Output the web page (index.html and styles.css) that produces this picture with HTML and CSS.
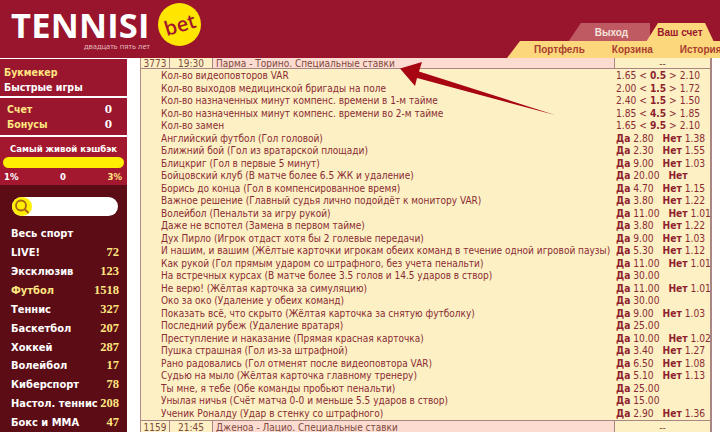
FILE: index.html
```html
<!DOCTYPE html>
<html lang="ru">
<head>
<meta charset="utf-8">
<title>Tennisi</title>
<link rel="stylesheet" href="styles.css">
</head>
<body>
<div class="page">
  <header class="header">
    <div class="logo">
      <div class="brand">
        <div class="brand-name">TENNISI</div>
        <div class="brand-sub">двадцать пять лет</div>
      </div>
      <div class="bet"><span>bet</span></div>
    </div>
    <nav class="tabs">
      <div class="tabs-top">
        <a class="tab tab-exit">Выход</a>
        <a class="tab tab-account">Ваш счет</a>
      </div>
      <div class="tabs-bottom">
        <a>Портфель</a><a>Корзина</a><a>История</a>
      </div>
    </nav>
  </header>
  <div class="body">
    <aside class="side">
      <section class="box box-nav">
        <div class="yellow">Букмекер</div>
        <div>Быстрые игры</div>
      </section>
      <section class="box box-acc">
        <div class="acc-row"><span class="yellow">Счет</span><b>0</b></div>
        <div class="acc-row"><span class="yellow">Бонусы</span><b>0</b></div>
      </section>
      <section class="box box-cash">
        <div class="cash-title">Самый живой кэшбэк</div>
        <div class="cash-bar"></div>
        <div class="cash-scale"><span>1%</span><span>0</span><span class="yellow">3%</span></div>
      </section>
      <section class="sports">
        <div class="search">
          <span class="search-icon">
            <svg width="19" height="19" viewBox="0 0 19 19"><circle cx="9" cy="8.5" r="5" fill="none" stroke="#a8651a" stroke-width="1.8"/><path d="M12.5 12l4 4" stroke="#a8651a" stroke-width="2" fill="none"/></svg>
          </span>
        </div>
        <div class="sport">Весь спорт</div>
        <div class="sport"><span>LIVE!</span><i>72</i></div>
        <div class="sport"><span>Эксклюзив</span><i>123</i></div>
        <div class="sport active"><span>Футбол</span><i>1518</i></div>
        <div class="sport"><span>Теннис</span><i>327</i></div>
        <div class="sport"><span>Баскетбол</span><i>207</i></div>
        <div class="sport"><span>Хоккей</span><i>287</i></div>
        <div class="sport"><span>Волейбол</span><i>17</i></div>
        <div class="sport"><span>Киберспорт</span><i>78</i></div>
        <div class="sport"><span>Настол. теннис</span><i>208</i></div>
        <div class="sport"><span>Бокс и ММА</span><i>47</i></div>
      </section>
    </aside>
    <main class="board">
      <div class="event">
        <div class="c-id">3773</div><div class="c-time">19:30</div><div class="c-title">Парма - Торино. Специальные ставки</div><div class="c-dash">--</div>
      </div>
      <div class="rows">
        <div class="row"><span>Кол-во видеоповторов VAR</span><span class="odds">1.65 &lt; <b>0.5</b> &gt; 2.10</span></div>
        <div class="row"><span>Кол-во выходов медицинской бригады на поле</span><span class="odds">2.00 &lt; <b>1.5</b> &gt; 1.72</span></div>
        <div class="row"><span>Кол-во назначенных минут компенс. времени в 1-м тайме</span><span class="odds">2.40 &lt; <b>1.5</b> &gt; 1.50</span></div>
        <div class="row"><span>Кол-во назначенных минут компенс. времени во 2-м тайме</span><span class="odds">1.85 &lt; <b>4.5</b> &gt; 1.85</span></div>
        <div class="row"><span>Кол-во замен</span><span class="odds">1.65 &lt; <b>9.5</b> &gt; 2.10</span></div>
        <div class="row"><span>Английский футбол (Гол головой)</span><span class="odds"><b>Да</b> 2.80 <b class="no">Нет</b> 1.38</span></div>
        <div class="row"><span>Ближний бой (Гол из вратарской площади)</span><span class="odds"><b>Да</b> 2.30 <b class="no">Нет</b> 1.55</span></div>
        <div class="row"><span>Блицкриг (Гол в первые 5 минут)</span><span class="odds"><b>Да</b> 9.00 <b class="no">Нет</b> 1.03</span></div>
        <div class="row"><span>Бойцовский клуб (В матче более 6.5 ЖК и удаление)</span><span class="odds"><b>Да</b> 20.00 <b class="no">Нет</b></span></div>
        <div class="row"><span>Борись до конца (Гол в компенсированное время)</span><span class="odds"><b>Да</b> 4.70 <b class="no">Нет</b> 1.15</span></div>
        <div class="row"><span>Важное решение (Главный судья лично подойдёт к монитору VAR)</span><span class="odds"><b>Да</b> 3.80 <b class="no">Нет</b> 1.22</span></div>
        <div class="row"><span>Волейбол (Пенальти за игру рукой)</span><span class="odds"><b>Да</b> 11.00 <b class="no">Нет</b> 1.01</span></div>
        <div class="row"><span>Даже не вспотел (Замена в первом тайме)</span><span class="odds"><b>Да</b> 3.80 <b class="no">Нет</b> 1.22</span></div>
        <div class="row"><span>Дух Пирло (Игрок отдаст хотя бы 2 голевые передачи)</span><span class="odds"><b>Да</b> 9.00 <b class="no">Нет</b> 1.03</span></div>
        <div class="row"><span>И нашим, и вашим (Жёлтые карточки игрокам обеих команд в течение одной игровой паузы)</span><span class="odds"><b>Да</b> 5.30 <b class="no">Нет</b> 1.12</span></div>
        <div class="row"><span>Как рукой (Гол прямым ударом со штрафного, без учета пенальти)</span><span class="odds"><b>Да</b> 11.00 <b class="no">Нет</b> 1.01</span></div>
        <div class="row"><span>На встречных курсах (В матче более 3.5 голов и 14.5 ударов в створ)</span><span class="odds"><b>Да</b> 30.00</span></div>
        <div class="row"><span>Не верю! (Жёлтая карточка за симуляцию)</span><span class="odds"><b>Да</b> 11.00 <b class="no">Нет</b> 1.01</span></div>
        <div class="row"><span>Око за око (Удаление у обеих команд)</span><span class="odds"><b>Да</b> 30.00</span></div>
        <div class="row"><span>Показать всё, что скрыто (Жёлтая карточка за снятую футболку)</span><span class="odds"><b>Да</b> 9.00 <b class="no">Нет</b> 1.03</span></div>
        <div class="row"><span>Последний рубеж (Удаление вратаря)</span><span class="odds"><b>Да</b> 25.00</span></div>
        <div class="row"><span>Преступление и наказание (Прямая красная карточка)</span><span class="odds"><b>Да</b> 10.00 <b class="no">Нет</b> 1.02</span></div>
        <div class="row"><span>Пушка страшная (Гол из-за штрафной)</span><span class="odds"><b>Да</b> 3.40 <b class="no">Нет</b> 1.27</span></div>
        <div class="row"><span>Рано радовались (Гол отменят после видеоповтора VAR)</span><span class="odds"><b>Да</b> 6.50 <b class="no">Нет</b> 1.08</span></div>
        <div class="row"><span>Судью на мыло (Жёлтая карточка главному тренеру)</span><span class="odds"><b>Да</b> 5.10 <b class="no">Нет</b> 1.13</span></div>
        <div class="row"><span>Ты мне, я тебе (Обе команды пробьют пенальти)</span><span class="odds"><b>Да</b> 25.00</span></div>
        <div class="row"><span>Унылая ничья (Счёт матча 0-0 и меньше 5.5 ударов в створ)</span><span class="odds"><b>Да</b> 15.00</span></div>
        <div class="row"><span>Ученик Роналду (Удар в стенку со штрафного)</span><span class="odds"><b>Да</b> 2.90 <b class="no">Нет</b> 1.36</span></div>
      </div>
      <div class="event event-last">
        <div class="c-id">1159</div><div class="c-time">21:45</div><div class="c-title">Дженоа - Лацио. Специальные ставки</div><div class="c-dash">--</div>
      </div>
    </main>
  </div>
  <svg class="arrow" width="720" height="432" viewBox="0 0 720 432"><path d="M400 68.5L422 62L419 71.5L555 115L417 78L415 86Z" fill="#a80512"/></svg>
</div>
</body>
</html>
```
FILE: styles.css
```css
* { box-sizing: border-box; }
html, body { margin: 0; padding: 0; background: #fff; }
.page { position: relative; width: 720px; height: 432px; overflow: hidden; font-family: "DejaVu Sans Condensed", "DejaVu Sans", sans-serif; }
.yellow { color: #ffe680; }

.header { height: 58px; background: #99152d; display: flex; justify-content: space-between; }
.logo { display: flex; padding: 3px 0 0 11px; align-items: flex-start; }
.brand { width: 147px; }
.brand-name { font-family: "Open Sans", sans-serif; font-weight: 700; font-size: 34.5px; line-height: 34px; margin-top: 5px; color: #fff; letter-spacing: .2px; }
.brand-sub { font-family: "Noto Sans", sans-serif; font-size: 7.5px; line-height: 9px; color: #e0b8bd; text-align: right; padding-right: 8px; }
.bet { width: 43px; height: 43px; border-radius: 50%; background: #ffe600; display: flex; align-items: center; justify-content: center; }
.bet span { font-family: "Open Sans", sans-serif; font-weight: 600; font-size: 20px; line-height: 20px; color: #a3172c; transform: rotate(-17deg); }

.tabs { width: 213px; display: flex; flex-direction: column; justify-content: flex-end; font-family: "Liberation Sans", sans-serif; }
.tabs-top { display: flex; height: 19px; padding-left: 61px; font-size: 10px; font-weight: 700; }
.tab { display: flex; align-items: center; justify-content: center; line-height: 1; }
.tab-exit { width: 82px; padding-left: 5px; background: #bf5a62; color: #f6e4dc; clip-path: polygon(13px 0, 100% 0, 100% 100%, 0 100%); }
.tab-account { width: 68px; margin-left: -4px; background: #fdd77c; color: #99152d; clip-path: polygon(12px 0, 59px 0, 100% 100%, 0 100%); }
.tabs-bottom { height: 17px; margin-top: -1px; background: #fdd77c; clip-path: polygon(13px 0, 100% 0, 100% 100%, 0 100%); display: flex; gap: 27px; padding-left: 27px; font-size: 10px; line-height: 17px; font-weight: 700; color: #a8402f; white-space: nowrap; }

.body { display: flex; height: 374px; }
.side { width: 127px; flex: none; display: flex; flex-direction: column; font-weight: 700; font-size: 10.5px; color: #fff; }
.box { background: #9a152e; margin-top: 2px; }
.box-nav { height: 38px; margin-top: 1px; padding: 6px 0 0 4px; line-height: 15px; }
.box-acc { height: 37px; padding: 4px 15px 0 7px; line-height: 15px; }
.acc-row { display: flex; justify-content: space-between; }
.acc-row b { font-family: "DejaVu Serif", serif; }
.box-cash { height: 49px; background: #a4182f; padding: 6px 3px 0; font-size: 9.5px; color: #fff; }
.cash-title { text-align: center; line-height: 11px; white-space: nowrap; }
.cash-bar { height: 11px; border-radius: 6px; background: #ffee00; margin-top: 3px; }
.cash-scale { display: flex; justify-content: space-between; line-height: 11px; margin-top: 3px; padding: 0 2px 0 1px; }
.sports { flex: 1; background: #5b0c15; padding: 12px 8px 0 11px; }
.search { height: 19px; margin: 0 1px; border-radius: 10px; background: #fff; }
.search-icon { display: block; width: 20px; height: 19px; border-radius: 50%; background: #ffee00; }
.sport { height: 18.9px; line-height: 19px; display: flex; justify-content: space-between; white-space: nowrap; font-size: 11px; }
.search + .sport { margin-top: 8px; }
.sport i { font-family: "Liberation Serif", serif; font-style: normal; font-size: 12.5px; color: #ffe680; }
.active { color: #ffe680; }

.board { width: 572px; margin-left: 13px; font-size: 10px; color: #8a2c34; background: #fdf0c4; border-left: 1px solid #b78a86; border-right: 2px solid #a98583; display: flex; flex-direction: column; }
.event { height: 11px; flex: none; display: flex; line-height: 11px; background: #fdf0c4; border-bottom: 1px solid #a98583; color: #7f4a40; }
.event > div { border-right: 1px solid #a98583; white-space: nowrap; overflow: hidden; }
.c-id { width: 29px; text-align: center; }
.c-time { width: 43px; text-align: center; }
.c-title { width: 402px; background: #fcdcd0; padding-left: 3px; }
.c-dash { flex: 1; text-align: center; border-right: 0 !important; }
.event-last { height: 14px; line-height: 14px; border-top: 1px solid #a98583; border-bottom: 0; }
.rows { flex: 1; padding-top: 1px; }
.row { height: 12.52px; line-height: 12.5px; padding-left: 20px; display: flex; white-space: nowrap; }
.row > span:first-child { width: 454px; flex: none; overflow: hidden; }
.odds { padding-left: 1px; font-size: 10.2px; }
.odds b { color: #8e1f2f; }
.no { margin-left: 6px; }
.arrow { position: absolute; left: 0; top: 0; pointer-events: none; }
```
